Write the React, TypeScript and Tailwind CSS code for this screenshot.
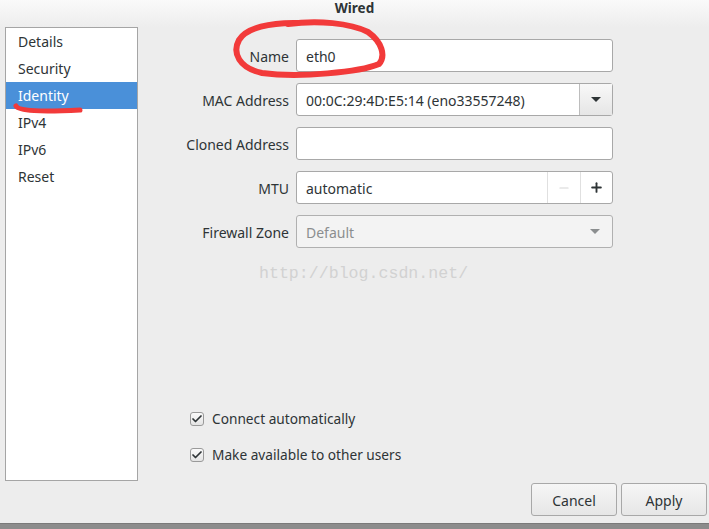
import { Check, Minus, Plus } from "lucide-react";

const sections = ["Details", "Security", "Identity", "IPv4", "IPv6", "Reset"];

function Field({ label, children }: { label: string; children: React.ReactNode }) {
  return (
    <>
      <div className="flex h-[33px] items-center justify-end pt-[2px] text-[#2e3436]">{label}</div>
      <div className="h-[33px]">{children}</div>
    </>
  );
}

function CheckRow({ label }: { label: string }) {
  return (
    <div className="flex h-[18px] items-center gap-[8px]">
      <span className="flex h-[14px] w-[14px] items-center justify-center rounded-[3px] border border-[#9a9a9a] bg-gradient-to-b from-[#fafafa] to-[#e4e4e4]">
        <Check size={12} strokeWidth={3.5} className="text-[#2e3436]" />
      </span>
      <span className="text-[#2e3436]">{label}</span>
    </div>
  );
}

export default function App() {
  return (
    <div
      className="relative flex h-[529px] w-[709px] flex-col overflow-hidden bg-[#ededed] text-[14px]"
      style={{ fontFamily: '"Noto Sans", "Open Sans", sans-serif' }}
    >
      {/* title bar */}
      <div className="h-[27px] shrink-0 bg-gradient-to-b from-[#fafafa] to-[#ededed] text-center text-[13.5px] font-bold leading-[17px] text-[#2e3436]">
        Wired
      </div>

      <div className="flex h-[454px] shrink-0">
        {/* sidebar */}
        <div className="ml-[5px] w-[133px] border border-[#a5a5a5] bg-white">
          {sections.map((s) => (
            <div
              key={s}
              className={`flex h-[27px] items-center pl-[12px] ${
                s === "Identity" ? "bg-[#4a90d9] text-white" : "text-[#2e3436]"
              }`}
            >
              {s}
            </div>
          ))}
        </div>

        {/* form */}
        <div className="flex flex-1 flex-col">
          <div className="grid grid-cols-[151px_317px] gap-x-[7px] gap-y-[11px] pt-[12px]">
            <Field label="Name">
              <div className="flex h-full items-center rounded-[3px] border border-[#a8a8a8] bg-white px-[9px] pt-[2px] text-[#2e3436]">
                eth0
              </div>
            </Field>
            <Field label="MAC Address">
              <div className="flex h-full rounded-[3px] border border-[#a8a8a8] bg-white text-[#2e3436]">
                <div className="flex flex-1 items-center px-[9px] pt-[2px]">00:0C:29:4D:E5:14 (eno33557248)</div>
                <div className="flex w-[33px] items-center justify-center border-l border-[#bdbdbd] bg-gradient-to-b from-[#f8f8f8] to-[#e6e6e6]">
                  <svg width="10" height="6" viewBox="0 0 10 6">
                    <path d="M0 0H10L5 5Z" fill="#2e3436" />
                  </svg>
                </div>
              </div>
            </Field>
            <Field label="Cloned Address">
              <div className="h-full rounded-[3px] border border-[#a8a8a8] bg-white" />
            </Field>
            <Field label="MTU">
              <div className="flex h-full rounded-[3px] border border-[#a8a8a8] bg-white text-[#2e3436]">
                <div className="flex flex-1 items-center px-[9px] pt-[2px]">automatic</div>
                <div className="flex w-[33px] items-center justify-center border-l border-[#e0e0e0]">
                  <Minus size={14} strokeWidth={2} className="text-[#d6d6d6]" />
                </div>
                <div className="flex w-[32px] items-center justify-center border-l border-[#e0e0e0]">
                  <Plus size={15} strokeWidth={3} className="text-[#2e3436]" />
                </div>
              </div>
            </Field>
            <Field label="Firewall Zone">
              <div className="flex h-full items-center rounded-[3px] border border-[#b0b0b0] bg-[#f3f3f3] pl-[9px] pr-[12px] text-[#8b8e8f]">
                <span className="flex-1 pt-[2px]">Default</span>
                <svg width="10" height="6" viewBox="0 0 10 6">
                  <path d="M0 0H10L5 5Z" fill="#8b8e8f" />
                </svg>
              </div>
            </Field>
          </div>

          <div className="mt-auto mb-[17px] flex flex-col gap-[18px] pl-[52px] text-[13.7px]">
            <CheckRow label="Connect automatically" />
            <CheckRow label="Make available to other users" />
          </div>
        </div>
      </div>

      {/* buttons */}
      <div className="flex justify-end gap-[4px] pr-[2px] pt-[2px]">
        <button className="h-[33px] w-[86px] rounded-[3px] border border-[#a8a8a8] bg-gradient-to-b from-[#f6f6f6] to-[#e6e6e6] pt-[1px] text-[#2e3436]">
          Cancel
        </button>
        <button className="h-[33px] w-[86px] rounded-[3px] border border-[#a8a8a8] bg-gradient-to-b from-[#f6f6f6] to-[#e6e6e6] pt-[1px] text-[#2e3436]">
          Apply
        </button>
      </div>

      <div className="mt-auto h-[6px] border-t border-[#7a7a7a] bg-[#8c8c8c]" />

      {/* watermark */}
      <div
        className="absolute left-[259px] top-[262px] text-[16.6px] text-[#d2d2d2]"
        style={{ fontFamily: '"Liberation Mono", monospace' }}
      >
        http://blog.csdn.net/
      </div>

      {/* red pen annotations */}
      <svg className="pointer-events-none absolute left-0 top-0" width="709" height="529">
        <path
          d="M300 23 C270 22 246 28 239 40 C232 53 239 68 262 73 C300 78 360 72 379 64 C386 56 382 42 368 32 C350 23 318 20 288 24"
          fill="none"
          stroke="#f23a3a"
          strokeWidth="6"
          strokeLinecap="round"
        />
        <path
          d="M16 106 C19 111 40 112 80 110"
          fill="none"
          stroke="#f23a3a"
          strokeWidth="5"
          strokeLinecap="round"
        />
      </svg>
    </div>
  );
}
